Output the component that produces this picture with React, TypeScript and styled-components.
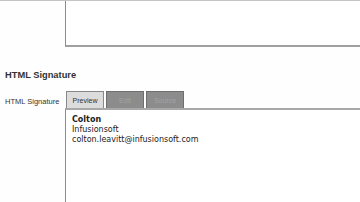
import React from "react";
import styled, { createGlobalStyle } from "styled-components";

const Global = createGlobalStyle`
  html, body {
    margin: 0;
    padding: 0;
    background: #fefefe;
    overflow: hidden;
  }
  body {
    width: 360px;
    height: 202px;
    font-family: "Liberation Sans", Arial, sans-serif;
  }
`;

const Page = styled.div`
  width: 360px;
  height: 202px;
  border-top: 1px solid #c4c4c4;
  box-sizing: border-box;
  overflow: hidden;
`;

const TopBox = styled.div`
  margin-left: 65px;
  width: 320px;
  height: 46px;
  border-left: 1px solid #8c8c8c;
  border-bottom: 2px solid #a0a0a0;
  box-sizing: border-box;
  background: #fff;
`;

const Heading = styled.h3`
  margin: 23px 0 0 5px;
  font-size: 9.3px;
  font-weight: bold;
  color: #333;
  line-height: 11px;
`;

const Row = styled.div`
  display: flex;
  margin-top: 10px;
  align-items: flex-start;
`;

const Label = styled.div`
  width: 65px;
  flex-shrink: 0;
  box-sizing: border-box;
  white-space: nowrap;
  padding: 6px 0 0 5px;
  font-size: 7.5px;
  color: #333;
`;

const Editor = styled.div`
  display: flex;
  flex-direction: column;
  flex-shrink: 0;
`;

const Tabs = styled.div`
  display: flex;
  gap: 2px;
  padding-left: 1px;
`;

const Tab = styled.div<{ $active?: boolean }>`
  width: 38px;
  height: 17px;
  box-sizing: border-box;
  display: flex;
  align-items: center;
  justify-content: center;
  font-size: 7px;
  border: 1px solid ${(p) => (p.$active ? "#888" : "#6f6f6f")};
  border-bottom: none;
  background: ${(p) => (p.$active ? "#dcdcdc" : "#8c8c8c")};
  color: ${(p) => (p.$active ? "#333" : "#a2a2a2")};
`;

const Content = styled.div`
  width: 320px;
  height: 95px;
  box-sizing: border-box;
  border-top: 2px solid #a8a8a8;
  border-left: 1px solid #8c8c8c;
  border-bottom: 1px solid #b4b4b4;
  background: #fff;
  padding: 5px 0 0 6px;
  font-family: "DejaVu Sans", Verdana, sans-serif;
  font-size: 8px;
  line-height: 10px;
  color: #222;
`;

const Strong = styled.div`
  font-weight: bold;
`;

export default function App() {
  return (
    <>
      <Global />
      <Page>
        <TopBox />
        <Heading>HTML Signature</Heading>
        <Row>
          <Label>HTML Signature</Label>
          <Editor>
            <Tabs>
              <Tab $active>Preview</Tab>
              <Tab>Edit</Tab>
              <Tab>Source</Tab>
            </Tabs>
            <Content>
              <Strong>Colton</Strong>
              <div>Infusionsoft</div>
              <div>colton.leavitt@infusionsoft.com</div>
            </Content>
          </Editor>
        </Row>
      </Page>
    </>
  );
}
